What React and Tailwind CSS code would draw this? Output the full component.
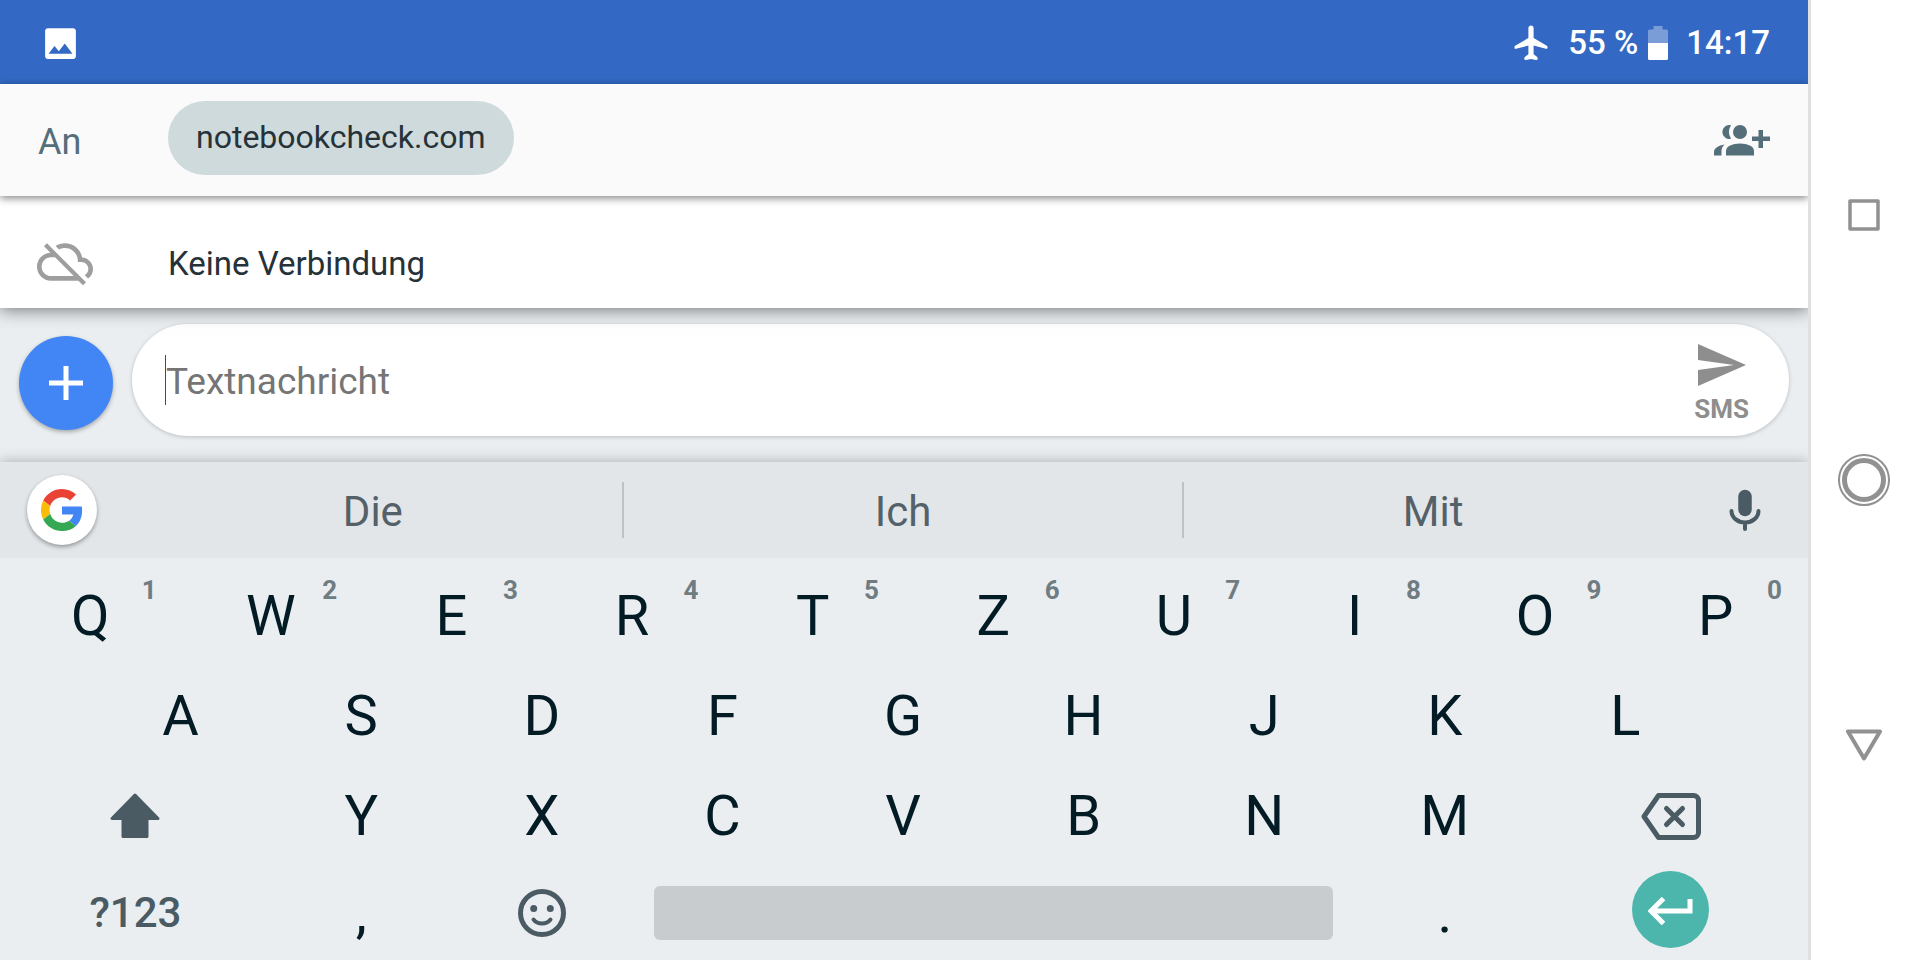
import React from "react";

const KEY = "text-[56px] leading-none text-[#021b24]";

function Key({ label, hint, wide = "col-span-2" }) {
  return (
    <button type="button" className={`relative flex items-center justify-center ${wide} ${KEY}`}>
      {label}
      {hint && (
        <span className="absolute right-6 top-[11px] text-[26px] font-bold leading-none text-[#6f7c82]">
          {hint}
        </span>
      )}
    </button>
  );
}

function ImageIcon() {
  return (
    <svg className="h-[41px] w-[41px] text-white" viewBox="0 0 24 24" fill="currentColor" aria-hidden="true">
      <path d="M21 19.400V4.600c0-.9-.7-1.600-1.600-1.600H4.600C3.700 3 3 3.700 3 4.600v14.800c0 .9.7 1.600 1.600 1.600h14.800c.9 0 1.600-.7 1.600-1.600zM8.500 13.500l2.500 3.010L14.500 12l4.500 6H5l3.500-4.500z" />
    </svg>
  );
}

function PlaneIcon() {
  return (
    <svg className="h-9 w-[34px]" viewBox="0 0 34 36" fill="currentColor" aria-hidden="true">
      <path d="M17 0.500c-1.500 0-2.600 1.100-2.600 2.600V13L1.600 20.600C.8 21.100.4 21.700.4 22.500c0 1.100.7 1.600 1.700 1.300L14.400 20.500v8.800l-3 2.200c-.8.600-1.200 1.300-1.200 2.100 0 1.100.8 1.600 1.800 1.300L17 34l5 .9c1 .3 1.800-.2 1.800-1.300 0-.8-.4-1.500-1.200-2.100l-3-2.200V20.500l12.300 3.300c1 .3 1.700-.2 1.700-1.300 0-.8-.4-1.400-1.200-1.900L19.600 13V3.100C19.600 1.600 18.500.5 17 .5z" />
    </svg>
  );
}

function BatteryIcon() {
  return (
    <svg className="h-[34px] w-5" viewBox="0 0 20 34" fill="#fff" aria-hidden="true">
      <path opacity=".35" d="M5.500 0h9v3.500H18.500A1.500 1.500 0 0 1 20 5v12H0V5A1.500 1.500 0 0 1 1.500 3.500H5.500z" />
      <path d="M0 17h20v15.500a1.500 1.500 0 0 1-1.500 1.500h-17A1.500 1.500 0 0 1 0 32.500z" />
    </svg>
  );
}

function CloudOffIcon() {
  return (
    <svg className="h-14 w-14 text-[#9e9e9e]" viewBox="0 0 24 24" fill="currentColor" aria-hidden="true">
      <path d="M19.350 10.040C18.670 6.590 15.640 4 12 4c-1.480 0-2.850.430-4.010 1.170l1.460 1.460C10.210 6.230 11.080 6 12 6c3.040 0 5.500 2.460 5.500 5.500v.5H19c1.660 0 3 1.340 3 3 0 1.130-.640 2.110-1.560 2.620l1.450 1.450C23.160 18.160 24 16.680 24 15c0-2.640-2.050-4.780-4.650-4.960zM3 5.270l2.750 2.740C2.560 8.150 0 10.770 0 14c0 3.310 2.690 6 6 6h11.730l2 2L21 20.730 4.270 4 3 5.270zM7.730 10l8 8H6c-2.210 0-4-1.790-4-4s1.790-4 4-4h1.730z" />
    </svg>
  );
}

function GroupAddIcon() {
  return (
    <svg className="h-[31px] w-14" viewBox="0 0 56 31" fill="currentColor" aria-hidden="true">
      <circle cx="26" cy="7" r="7" />
      <path d="M12 30.500V26c0-4.700 6.500-7.500 14-7.500S40 21.300 40 26v4.500z" />
      <path d="M17 .2A7 7 0 1 0 17 13.800 13 13 0 0 1 17 .2z" />
      <path d="M0 30.500V27c0-3.800 4.500-6.600 10.500-7.500C8.500 21.300 7.500 23.500 7.500 26v4.500z" />
      <path d="M44.500 5h4.500v6.500H56v4.500h-7V23h-4.500v-7H38v-4.500h6.500z" />
    </svg>
  );
}

function GoogleLogo() {
  return (
    <svg className="h-[42px] w-[42px]" viewBox="0 0 48 48" aria-hidden="true">
      <path fill="#EA4335" d="M24 9.500c3.540 0 6.710 1.220 9.210 3.600l6.850-6.850C35.900 2.380 30.470 0 24 0 14.620 0 6.510 5.380 2.560 13.220l7.980 6.190C12.430 13.720 17.740 9.500 24 9.500z" />
      <path fill="#4285F4" d="M46.980 24.550c0-1.570-.150-3.090-.380-4.550H24v9.020h12.940c-.580 2.960-2.260 5.480-4.780 7.180l7.730 6c4.510-4.180 7.090-10.360 7.090-17.650z" />
      <path fill="#FBBC05" d="M10.530 28.590c-.480-1.450-.760-2.990-.760-4.590s.270-3.140.760-4.590l-7.980-6.190C.920 16.460 0 20.120 0 24c0 3.880.920 7.540 2.560 10.780l7.970-6.190z" />
      <path fill="#34A853" d="M24 48c6.480 0 11.930-2.130 15.890-5.810l-7.730-6c-2.150 1.450-4.920 2.300-8.160 2.300-6.260 0-11.570-4.220-13.470-9.910l-7.980 6.190C6.510 42.620 14.620 48 24 48z" />
    </svg>
  );
}

export default function App() {
  return (
    <div className="flex min-h-screen w-full bg-white font-[Roboto,sans-serif]">
      <div className="flex min-w-0 flex-1 flex-col overflow-hidden bg-[#eaeef1]">
        <header className="flex h-[84px] items-center justify-between bg-[#3369c4] pl-10 pr-[38px] pt-[2px] text-[33px] font-medium text-white">
          <ImageIcon />
          <div className="flex items-center">
            <PlaneIcon />
            <span className="ml-5">55 %</span>
            <span className="ml-[10px]"><BatteryIcon /></span>
            <time className="ml-[18px]">14:17</time>
          </div>
        </header>

        <section className="relative z-20 flex h-28 items-center bg-[#fafafa] pl-[38px] pr-[38px] shadow-[0_2px_8px_rgba(0,0,0,0.5)]">
          <span className="w-[130px] pt-1 text-[36px] text-[#546e7a]">An</span>
          <button type="button" className="mb-1 flex h-[74px] items-center rounded-full bg-[#cfdadc] px-7 pb-[2px] text-[32px] text-[#263238]">
            notebookcheck.com
          </button>
          <button type="button" aria-label="Personen hinzufügen" className="ml-auto text-[#546e7a]">
            <GroupAddIcon />
          </button>
        </section>

        <section className="relative z-10 flex h-28 items-center bg-white pl-[37px] pt-5 shadow-[0_2px_16px_rgba(0,0,0,0.5)]">
          <CloudOffIcon />
          <p className="ml-[75px] pt-1 text-[33px] text-[#263238]">Keine Verbindung</p>
        </section>

        <section className="flex h-[154px] items-start gap-[19px] pl-[19px] pr-[19px] pt-4">
          <button
            type="button"
            aria-label="Anhang hinzufügen"
            className="mt-3 flex size-[94px] shrink-0 items-center justify-center rounded-full bg-[#4285f4] shadow-[0_2px_4px_rgba(0,0,0,0.3)]"
          >
            <svg className="size-[34px]" viewBox="0 0 34 34" stroke="#fff" strokeWidth="5" aria-hidden="true">
              <path d="M17 0v34M0 17h34" />
            </svg>
          </button>
          <div className="flex h-28 min-w-0 flex-1 items-center rounded-full bg-white pl-[33px] pr-10 shadow-[0_1px_4px_rgba(0,0,0,0.2)]">
            <span className="h-[50px] w-px bg-[#37505c]" />
            <input
              type="text"
              aria-label="Textnachricht"
              placeholder="Textnachricht"
              className="min-w-0 flex-1 bg-transparent pt-1 text-[37px] outline-none placeholder:text-[#757575]"
            />
            <button type="button" className="flex flex-col items-center gap-2 pt-1 text-[26px] font-bold leading-[30px] text-[#8e8e8e]">
              <svg className="mt-1 h-[42px] w-12" viewBox="0 0 48 42" fill="currentColor" aria-hidden="true">
                <path d="M0 0l48 21L0 42V26l36-5L0 16z" />
              </svg>
              SMS
            </button>
          </div>
        </section>

        <section className="flex h-24 items-center bg-[#e2e6e9] text-[42px] text-[#546168] shadow-[0_-1px_12px_rgba(0,0,0,0.25)]">
          <div className="flex w-[124px] justify-center">
            <button
              type="button"
              aria-label="Google"
              className="flex size-[70px] items-center justify-center rounded-full bg-white shadow-[0_2px_4px_rgba(0,0,0,0.35)]"
            >
              <GoogleLogo />
            </button>
          </div>
          <button type="button" className="h-14 flex-[499] pt-1 leading-none">Die</button>
          <button type="button" className="h-14 flex-[560] border-x-2 border-[#bcc2c5] pt-1 leading-none">Ich</button>
          <button type="button" className="h-14 flex-[499] pt-1 leading-none">Mit</button>
          <button type="button" aria-label="Spracheingabe" className="flex w-[126px] justify-center text-[#4a5b64]">
            <svg className="h-[42px] w-8" viewBox="0 0 32 42" fill="none" stroke="currentColor" strokeLinecap="round" aria-hidden="true">
              <path d="M16 7.500v13" strokeWidth="13.500" />
              <path d="M2.500 22a13.500 11.500 0 0 0 27 0M16 34v6" strokeWidth="4" />
            </svg>
          </button>
        </section>

        <section aria-label="Tastatur" className="relative flex flex-1 flex-col bg-[#eaeef1] pr-[2px] pt-2">
          <div className="grid h-[100px] grid-cols-20">
            {["Q", "W", "E", "R", "T", "Z", "U", "I", "O", "P"].map((k, i) => (
              <Key key={k} label={k} hint={String((i + 1) % 10)} />
            ))}
          </div>
          <div className="grid h-[100px] grid-cols-20">
            <span />
            {["A", "S", "D", "F", "G", "H", "J", "K", "L"].map((k) => (
              <Key key={k} label={k} />
            ))}
          </div>
          <div className="grid h-[100px] grid-cols-20">
            <button type="button" aria-label="Umschalttaste" className="col-span-3 flex items-center justify-center text-[#4a5b64]">
              <svg className="h-[46px] w-[50px]" viewBox="0 0 50 46" fill="currentColor" stroke="currentColor" strokeWidth="3" strokeLinejoin="round" aria-hidden="true">
                <path d="M25 2L2 25.500h11V43.500h24V25.500h11z" />
              </svg>
            </button>
            {["Y", "X", "C", "V", "B", "N", "M"].map((k) => (
              <Key key={k} label={k} />
            ))}
            <button type="button" aria-label="Löschen" className="col-span-3 flex items-center justify-center text-[#4a5b64]">
              <svg className="h-[47px] w-[60px]" viewBox="0 0 60 47" fill="none" stroke="currentColor" strokeWidth="5" strokeLinejoin="round" strokeLinecap="round" aria-hidden="true">
                <path d="M17.500 2.500h35a5 5 0 0 1 5 5v32a5 5 0 0 1-5 5H17.500L3 23.500z" />
                <path d="M25.500 15.500l16 16M41.500 15.500l-16 16" />
              </svg>
            </button>
          </div>
          <div className="grid flex-1 grid-cols-20">
            <button type="button" className="col-span-3 text-[42px] font-medium leading-none text-[#4a5b64]">?123</button>
            <Key label="," />
            <button type="button" aria-label="Emoji" className="col-span-2 flex items-center justify-center text-[#4a5b64]">
              <svg className="size-12" viewBox="0 0 48 48" fill="none" stroke="currentColor" strokeWidth="5" strokeLinecap="round" aria-hidden="true">
                <circle cx="24" cy="24" r="21.500" />
                <path d="M15.500 30.500c4 5.300 13 5.300 17 0" strokeWidth="4" />
                <circle cx="15.700" cy="19.500" r="3.500" fill="currentColor" stroke="none" />
                <circle cx="32.300" cy="19.500" r="3.500" fill="currentColor" stroke="none" />
              </svg>
            </button>
            <div className="col-span-8 flex items-center px-[22px]">
              <button type="button" aria-label="Leertaste" className="h-[54px] w-full rounded-md bg-[#c8cccf]" />
            </div>
            <Key label="." />
            <div className="col-span-3 flex items-center justify-center">
              <button type="button" aria-label="Eingabe" className="mb-2 flex size-[77px] items-center justify-center rounded-full bg-[#4db6ac]">
                <svg className="mt-1 h-7 w-[46px]" viewBox="0 0 46 28" fill="none" stroke="#fff" strokeWidth="5" aria-hidden="true">
                  <path d="M42 2v12H3M15.500 1.500L3 14l12.500 12.500" />
                </svg>
              </button>
            </div>
          </div>
        </section>
      </div>

      <nav className="flex w-28 flex-col items-center justify-between bg-white pb-[199px] pt-[199px] text-[#919191] shadow-[inset_3px_0_0_#e0e0e0]">
        <button type="button" aria-label="Letzte Apps">
          <svg className="size-8" viewBox="0 0 32 32" fill="none" stroke="currentColor" strokeWidth="3.500" strokeLinejoin="round" aria-hidden="true">
            <path d="M2 2h28v28H2z" />
          </svg>
        </button>
        <button type="button" aria-label="Startbildschirm">
          <svg className="size-[52px]" viewBox="0 0 52 52" fill="none" stroke="currentColor" aria-hidden="true">
            <circle cx="26" cy="26" r="25" strokeWidth="2" />
            <circle cx="26" cy="26" r="19.500" strokeWidth="5" />
          </svg>
        </button>
        <button type="button" aria-label="Zurück">
          <svg className="h-8 w-9" viewBox="0 0 36 32" fill="none" stroke="currentColor" strokeWidth="4" strokeLinejoin="round" aria-hidden="true">
            <path d="M2 2.500h32L18 29.500z" />
          </svg>
        </button>
      </nav>
    </div>
  );
}
